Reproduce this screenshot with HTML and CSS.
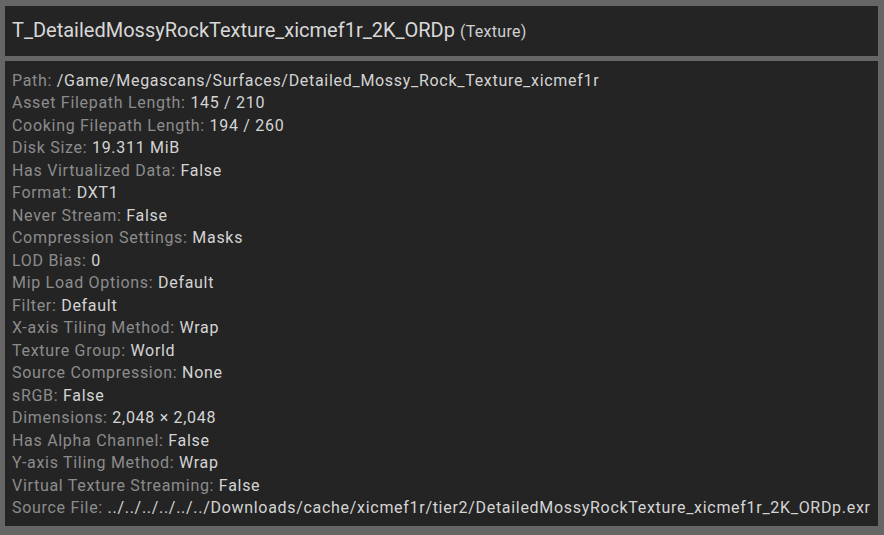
FILE: index.html
```html
<!DOCTYPE html>
<html>
<head>
<meta charset="utf-8">
<link rel="stylesheet" href="styles.css">
</head>
<body>
<div class="tooltip">
  <div class="header">
    <span class="title">T_DetailedMossyRockTexture_xicmef1r_2K_ORDp</span>
    <span class="type">(Texture)</span>
  </div>
  <div class="details">
    <div class="row"><span class="k">Path:</span> <span class="v">/Game/Megascans/Surfaces/Detailed_Mossy_Rock_Texture_xicmef1r</span></div>
    <div class="row"><span class="k">Asset Filepath Length:</span> <span class="v">145 / 210</span></div>
    <div class="row"><span class="k">Cooking Filepath Length:</span> <span class="v">194 / 260</span></div>
    <div class="row"><span class="k">Disk Size:</span> <span class="v">19.311 MiB</span></div>
    <div class="row"><span class="k">Has Virtualized Data:</span> <span class="v">False</span></div>
    <div class="row"><span class="k">Format:</span> <span class="v">DXT1</span></div>
    <div class="row"><span class="k">Never Stream:</span> <span class="v">False</span></div>
    <div class="row"><span class="k">Compression Settings:</span> <span class="v">Masks</span></div>
    <div class="row"><span class="k">LOD Bias:</span> <span class="v">0</span></div>
    <div class="row"><span class="k">Mip Load Options:</span> <span class="v">Default</span></div>
    <div class="row"><span class="k">Filter:</span> <span class="v">Default</span></div>
    <div class="row"><span class="k">X-axis Tiling Method:</span> <span class="v">Wrap</span></div>
    <div class="row"><span class="k">Texture Group:</span> <span class="v">World</span></div>
    <div class="row"><span class="k">Source Compression:</span> <span class="v">None</span></div>
    <div class="row"><span class="k">sRGB:</span> <span class="v">False</span></div>
    <div class="row"><span class="k">Dimensions:</span> <span class="v">2,048 × 2,048</span></div>
    <div class="row"><span class="k">Has Alpha Channel:</span> <span class="v">False</span></div>
    <div class="row"><span class="k">Y-axis Tiling Method:</span> <span class="v">Wrap</span></div>
    <div class="row"><span class="k">Virtual Texture Streaming:</span> <span class="v">False</span></div>
    <div class="row"><span class="k">Source File:</span> <span class="v">../../../../../../Downloads/cache/xicmef1r/tier2/DetailedMossyRockTexture_xicmef1r_2K_ORDp.exr</span></div>
  </div>
</div>
</body>
</html>
```
FILE: styles.css
```css
html, body {
  margin: 0;
  padding: 0;
  background: #666666;
}
body {
  font-family: Roboto, "Noto Sans", sans-serif;
  width: 884px;
  height: 535px;
  overflow: hidden;
}
.tooltip {
  display: flex;
  flex-direction: column;
  gap: 5px;
  padding: 6px 6px 9px 5px;
}
.header {
  background: #242424;
  height: 50px;
  display: flex;
  align-items: center;
  padding-left: 7px;
  gap: 5px;
  padding-bottom: 2px;
  box-sizing: border-box;
}
.title {
  font-size: 20px;
  color: #d8d8d8;
}
.type {
  font-size: 16px;
  letter-spacing: 0.3px;
  color: #d0d0d0;
  position: relative;
  top: 1px;
}
.details {
  background: #242424;
  height: 465px;
  box-sizing: border-box;
  padding: 8.5px 7px 7px;
  font-size: 16px;
  letter-spacing: 0.7px;
  line-height: 22.5px;
}
.row {
  white-space: nowrap;
}
.k {
  color: #8c8c8c;
}
.v {
  color: #d4d4d4;
}
```
